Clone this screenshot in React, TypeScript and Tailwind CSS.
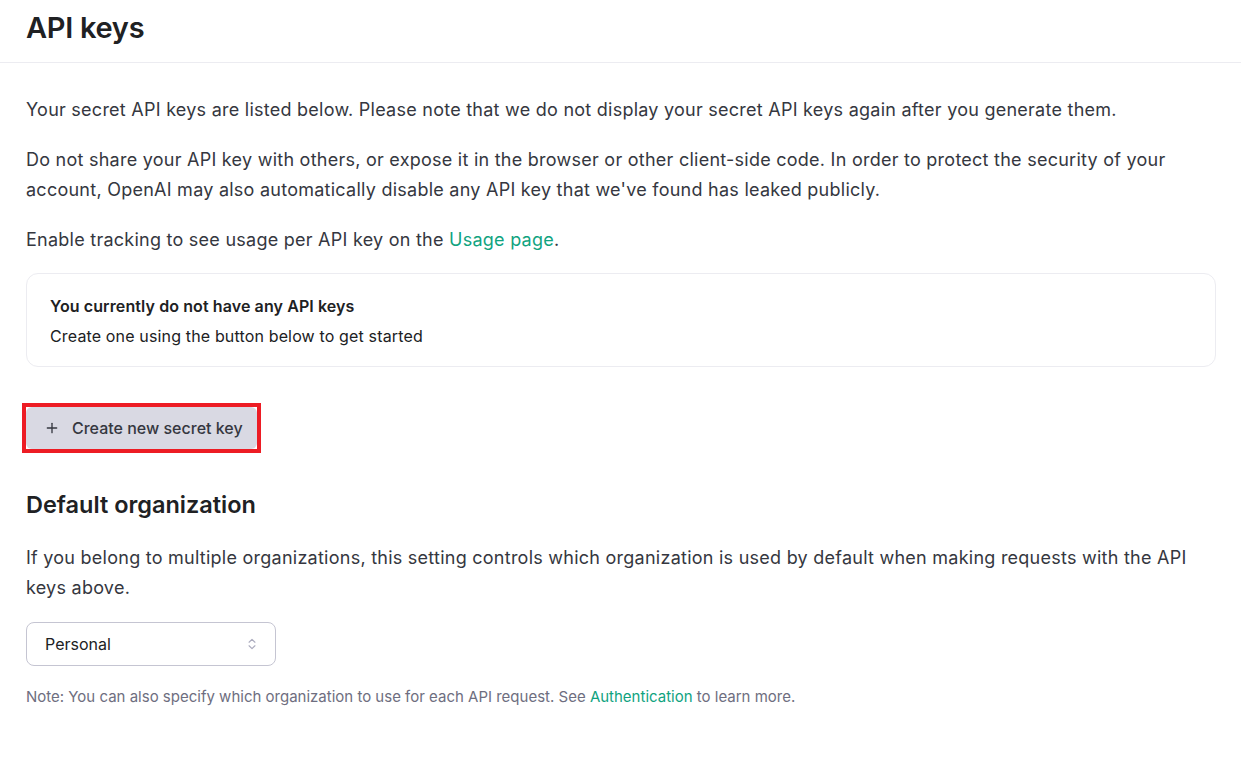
import { Plus, ChevronsUpDown } from "lucide-react";

export default function App() {
  return (
    <div className="min-h-screen bg-white font-['Inter',sans-serif] text-[#353740]">
      <div className="border-b border-[#ececf1] px-[26px] pb-[17px] pt-[11px]">
        <h1 className="text-[29px] font-semibold leading-[34px] tracking-[-0.01em] text-[#202123]">API keys</h1>
      </div>
      <div className="pl-[26px] pr-[25px] pt-[32px]">
        <div className="space-y-[20px] text-[18px] leading-[30px] tracking-[0.25px]">
          <p>
            Your secret API keys are listed below. Please note that we do not display your secret API keys again after
            you generate them.
          </p>
          <p>
            Do not share your API key with others, or expose it in the browser or other client-side code. In order to
            protect the security of your account, OpenAI may also automatically disable any API key that we've found has
            leaked publicly.
          </p>
          <p>
            Enable tracking to see usage per API key on the <a className="text-[#10a37f]">Usage page</a>.
          </p>
        </div>

        <div className="mt-[18px] rounded-xl border border-[#ececf1] px-[23px] pt-[17px] pb-[15px] text-[16px] leading-[30px] tracking-[0.15px] text-[#202123]">
          <div className="font-semibold tracking-[0.1px]">You currently do not have any API keys</div>
          <div>Create one using the button below to get started</div>
        </div>

        <div className="mt-[36px] ml-[-4px] inline-flex border-4 border-[#ed1c24]">
          <button className="flex h-[42px] items-center gap-[12px] rounded-md bg-[#d9d9e3] pl-[18px] pr-[14px] text-[16px] font-medium text-[#353740]">
            <Plus size={16} strokeWidth={2} />
            Create new secret key
          </button>
        </div>

        <h2 className="mt-[36px] text-[23.5px] font-semibold leading-[32px] text-[#202123]">Default organization</h2>
        <p className="mt-[22px] text-[18px] leading-[30px] tracking-[0.25px]">
          If you belong to multiple organizations, this setting controls which organization is used by default when making
          requests with the API keys above.
        </p>
        <div className="mt-[19px] flex h-[44px] w-[250px] items-center justify-between rounded-lg border border-[#c5c5d2] pl-[18px] pr-[16px] text-[16px] text-[#202123]">
          <span>Personal</span>
          <ChevronsUpDown size={14} className="text-[#acacbe]" />
        </div>
        <p className="mt-[21px] text-[15px] leading-[20px] text-[#6e6e80]">
          Note: You can also specify which organization to use for each API request. See{" "}
          <a className="text-[#10a37f]">Authentication</a> to learn more.
        </p>
      </div>
    </div>
  );
}
